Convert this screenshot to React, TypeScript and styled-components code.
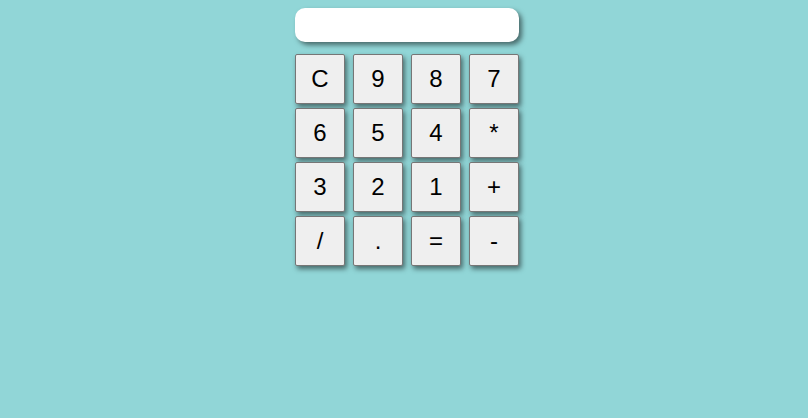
import React from "react";
import styled, { createGlobalStyle } from "styled-components";

const Global = createGlobalStyle`
  html, body { margin: 0; padding: 0; }
  body {
    background: #91d6d7;
    font-family: "Liberation Sans", Arial, sans-serif;
    min-height: 418px;
  }
`;

const Page = styled.div`
  display: flex;
  justify-content: center;
  padding-top: 8px;
  padding-left: 6px;
`;

const Calc = styled.div`
  width: 224px;
  display: flex;
  flex-direction: column;
  gap: 12px;
`;

const Display = styled.div`
  height: 34px;
  background: #ffffff;
  border-radius: 10px;
  box-shadow: 3px 3px 5px rgba(0, 0, 0, 0.5);
`;

const Keypad = styled.div`
  display: grid;
  grid-template-columns: repeat(4, 50px);
  grid-auto-rows: 50px;
  column-gap: 8px;
  row-gap: 4px;
`;

const Key = styled.button`
  box-sizing: border-box;
  width: 50px;
  height: 50px;
  margin: 0;
  padding: 0;
  background: #efefef;
  border: 1px solid #767676;
  border-radius: 2px;
  box-shadow: 2px 3px 5px rgba(0, 0, 0, 0.5);
  font-family: "Liberation Sans", Arial, sans-serif;
  font-size: 24px;
  color: #000;
  display: flex;
  align-items: center;
  justify-content: center;
`;

const keys = ["C", "9", "8", "7", "6", "5", "4", "*", "3", "2", "1", "+", "/", ".", "=", "-"];

export default function App() {
  return (
    <>
      <Global />
      <Page>
        <Calc>
          <Display />
          <Keypad>
            {keys.map((k) => (
              <Key key={k}>{k}</Key>
            ))}
          </Keypad>
        </Calc>
      </Page>
    </>
  );
}
